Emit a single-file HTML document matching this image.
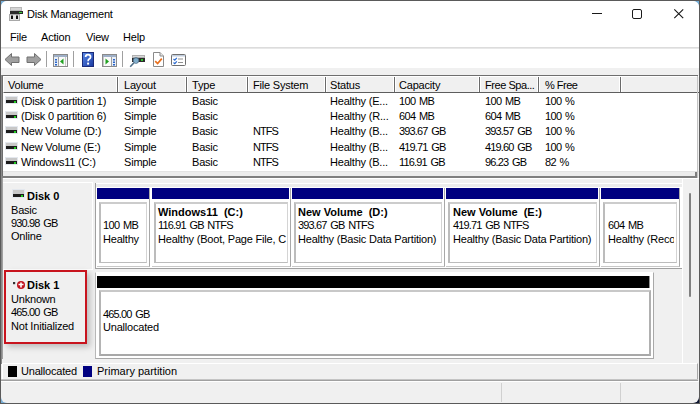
<!DOCTYPE html>
<html><head><meta charset="utf-8">
<style>
*{box-sizing:border-box;margin:0;padding:0}
html,body{width:700px;height:404px;overflow:hidden}
body{position:relative;background:#5a5a5a;font-family:"Liberation Sans",sans-serif;font-size:11px;color:#000;letter-spacing:-0.2px}
div{position:absolute}
.t{white-space:nowrap;line-height:13px}
.n{letter-spacing:-0.6px;word-spacing:1px}
.d{letter-spacing:-0.85px;word-spacing:1.5px}
.b{font-weight:bold;letter-spacing:0;white-space:pre}
#desk{left:1px;top:1px;width:698px;height:402px;background:#78aed6}
#win{left:1px;top:1px;width:698px;height:402px;background:#f0f0f0;border-radius:6px;overflow:hidden}
.ln{height:1px}
.vl{width:1px}
.hdc{top:0;height:16px}
.row{left:0;height:15px;width:100%}
.ic{width:11px;height:6px;background:#1c1c1c;border-top:3px solid #c8c8c8;box-shadow:0 0 0 1px #e4e8ee}
.ic:after{content:"";position:absolute;left:8px;top:1px;width:2px;height:2px;background:#22cc22}
</style></head><body>
<div id="desk"></div>
<div style="left:690px;top:394px;width:9px;height:9px;background:#0c1430"></div>
<div id="win">
  <!-- title + menu + toolbar (white) -->
  <div style="left:0;top:0;width:698px;height:67px;background:#fff"></div>
  <div class="ln" style="left:0;top:46px;width:698px;background:#dcdcdc"></div>
  <div class="ln" style="left:0;top:47px;width:698px;background:#e8e8e8"></div>
  <!-- app icon -->
  <svg style="position:absolute;left:7px;top:6px" width="16" height="15">
    <rect x="2.5" y="0.5" width="11" height="3" fill="#d4d4d4" stroke="#b8b8b8"/>
    <rect x="2" y="4" width="13" height="3" fill="#2a2a2a"/>
    <rect x="11" y="5" width="3" height="1" fill="#3cd03c"/>
    <rect x="1.5" y="7.5" width="10" height="6" fill="#e2e2e2" stroke="#a8a8a8"/>
    <rect x="3" y="8.5" width="2" height="3.5" fill="#111"/>
    <rect x="8" y="8.5" width="2" height="3.5" fill="#111"/>
  </svg>
  <div class="t" style="left:26px;top:7px">Disk Management</div>
  <!-- window controls -->
  <div style="left:591px;top:12px;width:10px;height:1px;background:#1a1a1a"></div>
  <div style="left:631px;top:8px;width:10px;height:10px;border:1.2px solid #1a1a1a;border-radius:2px"></div>
  <svg style="position:absolute;left:672px;top:7px" width="12" height="12"><path d="M1.3 1.3 L10.2 10.2 M10.2 1.3 L1.3 10.2" stroke="#1a1a1a" stroke-width="1.15"/></svg>
  <!-- menu -->
  <div class="t" style="left:9px;top:30px">File</div>
  <div class="t" style="left:40px;top:30px">Action</div>
  <div class="t" style="left:85px;top:30px">View</div>
  <div class="t" style="left:122px;top:30px">Help</div>
  <!-- toolbar -->
  <svg style="position:absolute;left:3px;top:51px" width="40" height="15">
    <path d="M1 7.5 L7.5 1.5 L7.5 5 L15 5 L15 10.5 L7.5 10.5 L7.5 13.5 Z" fill="#a0a0a0" stroke="#707070" stroke-width="1"/>
    <path d="M37 7.5 L30.5 1.5 L30.5 5 L23 5 L23 10.5 L30.5 10.5 L30.5 13.5 Z" fill="#a0a0a0" stroke="#707070" stroke-width="1"/>
  </svg>
  <div class="vl" style="left:45px;top:50px;height:16px;background:#a0a0a0"></div>
  <div class="vl" style="left:72px;top:50px;height:16px;background:#a0a0a0"></div>
  <div class="vl" style="left:121px;top:50px;height:16px;background:#a0a0a0"></div>
  <!-- icon: console tree -->
  <svg style="position:absolute;left:52px;top:53px" width="16" height="13">
    <rect x="0.5" y="0.5" width="14" height="12" fill="#fafafa" stroke="#8a8a8a"/>
    <rect x="1" y="1" width="13" height="2" fill="#9fb0c8"/>
    <rect x="1" y="3" width="4" height="9" fill="#e8eef6"/>
    <rect x="2" y="5" width="2" height="1.5" fill="#2a64c8"/><rect x="2" y="7.5" width="2" height="1.5" fill="#2a64c8"/><rect x="2" y="10" width="2" height="1.5" fill="#2a64c8"/>
    <rect x="5" y="3" width="1" height="9" fill="#a0a0a0"/>
    <path d="M10.5 4.5 L7 7.5 L10.5 10.5 Z" fill="#20a020"/>
    <rect x="12" y="3" width="1" height="9" fill="#c8c8c8"/>
  </svg>
  <!-- help icon -->
  <svg style="position:absolute;left:81px;top:51px" width="13" height="16">
    <defs><linearGradient id="hg" x1="0" y1="0" x2="1" y2="1"><stop offset="0" stop-color="#5a8ae8"/><stop offset="1" stop-color="#1838a0"/></linearGradient></defs>
    <rect x="0.5" y="0.5" width="11" height="14" fill="url(#hg)" stroke="#1a2a78"/>
    <path d="M3.6 5 Q3.6 2.6 6 2.6 Q8.6 2.6 8.6 5 Q8.6 6.4 6.9 7.3 Q6.1 7.8 6.1 9.2" fill="none" stroke="#fff" stroke-width="1.7"/>
    <rect x="5.1" y="10.6" width="2" height="2" fill="#fff"/>
  </svg>
  <!-- action pane icon -->
  <svg style="position:absolute;left:101px;top:53px" width="16" height="13">
    <rect x="0.5" y="0.5" width="14" height="12" fill="#fafafa" stroke="#8a8a8a"/>
    <rect x="1" y="1" width="13" height="2" fill="#9fb0c8"/>
    <rect x="1" y="3" width="1" height="9" fill="#c8c8c8"/>
    <path d="M3.5 4.5 L7 7.5 L3.5 10.5 Z" fill="#20a020"/>
    <rect x="9" y="3" width="1" height="9" fill="#a0a0a0"/>
    <rect x="10" y="3" width="4" height="9" fill="#e8eef6"/>
    <rect x="11" y="5" width="2" height="1.5" fill="#2a64c8"/><rect x="11" y="7.5" width="2" height="1.5" fill="#2a64c8"/><rect x="11" y="10" width="2" height="1.5" fill="#2a64c8"/>
  </svg>
  <!-- rescan icon -->
  <svg style="position:absolute;left:128px;top:53px" width="17" height="14">
    <rect x="3.5" y="1.5" width="12" height="2" fill="#d8d8d8" stroke="#b0b0b0" stroke-width="1"/>
    <rect x="3" y="4" width="13" height="4" fill="#2c2c2c"/>
    <rect x="12" y="5" width="2" height="2" fill="#30c030"/>
    <circle cx="7" cy="6.5" r="2.8" fill="#8ec4e8" fill-opacity="0.85" stroke="#50708a" stroke-width="1"/>
    <path d="M5 8.8 L1.2 12.8" stroke="#50708a" stroke-width="1.6"/>
  </svg>
  <!-- properties icon -->
  <svg style="position:absolute;left:151px;top:50px" width="13" height="17">
    <path d="M1.5 1.5 H8 L11.5 5 V15.5 H1.5 Z" fill="#fff" stroke="#8a8a8a"/><path d="M8 1.5 V5 H11.5" fill="#e8e8e8" stroke="#8a8a8a"/>
    <path d="M3.2 10.2 L5.6 12.6 L9.8 7.6" fill="none" stroke="#e8701e" stroke-width="1.7"/>
  </svg>
  <!-- checklist icon -->
  <svg style="position:absolute;left:170px;top:53px" width="16" height="12">
    <rect x="0.5" y="0.5" width="14" height="11" rx="1" fill="#fff" stroke="#707070"/>
    <rect x="1" y="1" width="13" height="1.5" fill="#c0ccdc"/>
    <path d="M2.5 5 L3.8 6.2 L5.8 3.8" fill="none" stroke="#2a6ad0" stroke-width="1.2"/>
    <path d="M2.5 8.5 L3.8 9.7 L5.8 7.3" fill="none" stroke="#2a6ad0" stroke-width="1.2"/>
    <rect x="7" y="4.5" width="5" height="1" fill="#909090"/><rect x="7" y="8" width="5" height="1" fill="#909090"/>
  </svg>

  <!-- LIST VIEW -->
  <div style="left:1px;top:74px;width:696px;height:103px;background:#fff;border-top:1px solid #6e6e6e;border-left:1px solid #6e6e6e">
    <div class="hdc" style="left:0;width:696px;height:17px;background:#f0f0f0;border-top:1px solid #fff;border-left:1px solid #fff;border-bottom:1px solid #5e5e5e"></div>
    <div style="left:113px;top:1px;width:3px;height:15px;border-left:1px solid #fff;border-right:1px solid #fff;background:#6a6a6a"></div>
    <div style="left:182px;top:1px;width:3px;height:15px;border-left:1px solid #fff;border-right:1px solid #fff;background:#6a6a6a"></div>
    <div style="left:243px;top:1px;width:3px;height:15px;border-left:1px solid #fff;border-right:1px solid #fff;background:#6a6a6a"></div>
    <div style="left:321px;top:1px;width:3px;height:15px;border-left:1px solid #fff;border-right:1px solid #fff;background:#6a6a6a"></div>
    <div style="left:390px;top:1px;width:3px;height:15px;border-left:1px solid #fff;border-right:1px solid #fff;background:#6a6a6a"></div>
    <div style="left:475px;top:1px;width:3px;height:15px;border-left:1px solid #fff;border-right:1px solid #fff;background:#6a6a6a"></div>
    <div style="left:534px;top:1px;width:3px;height:15px;border-left:1px solid #fff;border-right:1px solid #fff;background:#6a6a6a"></div>
    <div style="left:616px;top:1px;width:3px;height:15px;border-left:1px solid #fff;border-right:1px solid #fff;background:#6a6a6a"></div>
    <div class="t" style="left:5px;top:3px">Volume</div>
    <div class="t" style="left:121px;top:3px">Layout</div>
    <div class="t" style="left:189px;top:3px">Type</div>
    <div class="t" style="left:250px;top:3px">File System</div>
    <div class="t" style="left:327px;top:3px">Status</div>
    <div class="t" style="left:396px;top:3px">Capacity</div>
    <div class="t" style="left:482px;top:3px;letter-spacing:-0.45px">Free Spa...</div>
    <div class="t" style="left:542px;top:3px;letter-spacing:-0.5px">% Free</div>

    <div class="row" style="top:17px">
      <div class="ic" style="left:3px;top:4px"></div>
      <div class="t" style="left:18px;top:2px">(Disk 0 partition 1)</div>
      <div class="t" style="left:121px;top:2px">Simple</div>
      <div class="t" style="left:189px;top:2px">Basic</div>
      <div class="t" style="left:327px;top:2px">Healthy (E...</div>
      <div class="t n" style="left:396px;top:2px">100 MB</div>
      <div class="t n" style="left:482px;top:2px">100 MB</div>
      <div class="t n" style="left:542px;top:2px">100 %</div>
    </div>
    <div class="row" style="top:32px">
      <div class="ic" style="left:3px;top:4px"></div>
      <div class="t" style="left:18px;top:2px">(Disk 0 partition 6)</div>
      <div class="t" style="left:121px;top:2px">Simple</div>
      <div class="t" style="left:189px;top:2px">Basic</div>
      <div class="t" style="left:327px;top:2px">Healthy (R...</div>
      <div class="t n" style="left:396px;top:2px">604 MB</div>
      <div class="t n" style="left:482px;top:2px">604 MB</div>
      <div class="t n" style="left:542px;top:2px">100 %</div>
    </div>
    <div class="row" style="top:47px">
      <div class="ic" style="left:3px;top:4px"></div>
      <div class="t" style="left:18px;top:2px">New Volume (D:)</div>
      <div class="t" style="left:121px;top:2px">Simple</div>
      <div class="t" style="left:189px;top:2px">Basic</div>
      <div class="t" style="left:250px;top:2px;letter-spacing:-1px">NTFS</div>
      <div class="t" style="left:327px;top:2px">Healthy (B...</div>
      <div class="t n d" style="left:396px;top:2px">393.67 GB</div>
      <div class="t n d" style="left:482px;top:2px">393.57 GB</div>
      <div class="t n" style="left:542px;top:2px">100 %</div>
    </div>
    <div class="row" style="top:63px">
      <div class="ic" style="left:3px;top:4px"></div>
      <div class="t" style="left:18px;top:2px">New Volume (E:)</div>
      <div class="t" style="left:121px;top:2px">Simple</div>
      <div class="t" style="left:189px;top:2px">Basic</div>
      <div class="t" style="left:250px;top:2px;letter-spacing:-1px">NTFS</div>
      <div class="t" style="left:327px;top:2px">Healthy (B...</div>
      <div class="t n d" style="left:396px;top:2px">419.71 GB</div>
      <div class="t n d" style="left:482px;top:2px">419.60 GB</div>
      <div class="t n" style="left:542px;top:2px">100 %</div>
    </div>
    <div class="row" style="top:78px">
      <div class="ic" style="left:3px;top:4px"></div>
      <div class="t" style="left:18px;top:2px">Windows11 (C:)</div>
      <div class="t" style="left:121px;top:2px">Simple</div>
      <div class="t" style="left:189px;top:2px">Basic</div>
      <div class="t" style="left:250px;top:2px;letter-spacing:-1px">NTFS</div>
      <div class="t" style="left:327px;top:2px">Healthy (B...</div>
      <div class="t n d" style="left:396px;top:2px">116.91 GB</div>
      <div class="t n d" style="left:482px;top:2px">96.23 GB</div>
      <div class="t n" style="left:542px;top:2px">82 %</div>
    </div>
    <div class="ln" style="left:0;top:95px;width:696px;background:#e3e3e3"></div>
    <div style="left:0;top:96px;width:696px;height:4px;background:#ececec"></div>
  </div>
  <div style="left:0;top:175px;width:696px;height:2px;background:#7e7e7e"></div>
  <div style="left:694px;top:171px;width:2px;height:5px;background:#7e7e7e"></div>
  <div class="vl" style="left:696px;top:75px;height:102px;background:#c4c4c4"></div>

  <!-- LOWER PANE -->
  <div class="vl" style="left:0;top:74px;height:289px;background:#8a8a8a;z-index:5"></div>
  <div style="left:1px;top:177px;width:697px;height:181px;background:#f0f0f0;border-left:1px solid #a0a0a0">
    <div class="ln" style="left:0;top:0;width:696px;background:#fff"></div>
  </div>

  <!-- Disk 0 label -->
  <div class="ic" style="left:12px;top:189px;width:11px;height:7px;border-top-width:4px"></div>
  <div class="t b" style="left:26px;top:189px">Disk 0</div>
  <div class="t" style="left:10px;top:203px">Basic</div>
  <div class="t n d" style="left:10px;top:216px">930.98 GB</div>
  <div class="t" style="left:10px;top:229px">Online</div>
  <div class="vl" style="left:91px;top:181px;height:87px;background:#fff"></div>
  <div class="ln" style="left:2px;top:181px;width:90px;background:#fff"></div>
  <div class="ln" style="left:2px;top:268px;width:90px;background:#fff"></div>

  <!-- Disk 0 partitions container -->
  <div style="left:94px;top:182px;width:587px;height:86px;background:#fff;border-left:1px solid #a0a0a0;border-bottom:1px solid #a0a0a0"><div style="left:0;top:1px;width:586px;height:3px;background:#ececec"></div></div>
  <!-- partition cells -->
  <div style="left:96px;top:187px;width:53px;height:79px;background:#fff;border-right:1px solid #a8a8a8;border-bottom:1px solid #c8c8c8">
    <div style="left:0;top:0;width:52px;height:11px;background:#000080"></div>
    <div style="left:2px;top:14px;width:48px;height:61px;border-left:2px solid #bcbcbc;border-top:2px solid #cccccc;border-right:1px solid #d4d4d4;border-bottom:1px solid #bcbcbc"></div>
    <div class="t n" style="left:6px;top:31px">100 MB</div>
    <div class="t" style="left:6px;top:45px">Healthy</div>
  </div>
  <div style="left:151px;top:187px;width:139px;height:79px;background:#fff;border-right:1px solid #a8a8a8;border-bottom:1px solid #c8c8c8">
    <div style="left:0;top:0;width:137px;height:11px;background:#000080"></div>
    <div style="left:2px;top:14px;width:134px;height:61px;border-left:2px solid #bcbcbc;border-top:2px solid #cccccc;border-right:1px solid #d4d4d4;border-bottom:1px solid #bcbcbc"></div>
    <div class="t b" style="left:6px;top:18px">Windows11  (C:)</div>
    <div class="t n d" style="left:6px;top:31px">116.91 GB NTFS</div>
    <div class="t" style="left:6px;top:45px;width:130px;overflow:hidden">Healthy (Boot, Page File, C</div>
  </div>
  <div style="left:291px;top:187px;width:153px;height:79px;background:#fff;border-right:1px solid #a8a8a8;border-bottom:1px solid #c8c8c8">
    <div style="left:0;top:0;width:151px;height:11px;background:#000080"></div>
    <div style="left:2px;top:14px;width:148px;height:61px;border-left:2px solid #bcbcbc;border-top:2px solid #cccccc;border-right:1px solid #d4d4d4;border-bottom:1px solid #bcbcbc"></div>
    <div class="t b" style="left:6px;top:18px">New Volume  (D:)</div>
    <div class="t n d" style="left:6px;top:31px">393.67 GB NTFS</div>
    <div class="t" style="left:6px;top:45px">Healthy (Basic Data Partition)</div>
  </div>
  <div style="left:445px;top:187px;width:154px;height:79px;background:#fff;border-right:1px solid #a8a8a8;border-bottom:1px solid #c8c8c8">
    <div style="left:0;top:0;width:152px;height:11px;background:#000080"></div>
    <div style="left:2px;top:14px;width:149px;height:61px;border-left:2px solid #bcbcbc;border-top:2px solid #cccccc;border-right:1px solid #d4d4d4;border-bottom:1px solid #bcbcbc"></div>
    <div class="t b" style="left:7px;top:18px">New Volume  (E:)</div>
    <div class="t n d" style="left:7px;top:31px">419.71 GB NTFS</div>
    <div class="t" style="left:7px;top:45px">Healthy (Basic Data Partition)</div>
  </div>
  <div style="left:600px;top:187px;width:79px;height:79px;background:#fff;border-right:1px solid #a8a8a8;border-bottom:1px solid #c8c8c8">
    <div style="left:0;top:0;width:78px;height:11px;background:#000080"></div>
    <div style="left:2px;top:14px;width:74px;height:61px;border-left:2px solid #bcbcbc;border-top:2px solid #cccccc;border-right:1px solid #d4d4d4;border-bottom:1px solid #bcbcbc"></div>
    <div class="t n" style="left:7px;top:31px">604 MB</div>
    <div class="t" style="left:7px;top:45px;width:66px;overflow:hidden">Healthy (Recovery Partition)</div>
  </div>

  <!-- Disk 1 label with red box -->
  <div style="left:3px;top:269px;width:83px;height:74px;border:2px solid #c8141e;box-shadow:3px 3px 6px rgba(0,0,0,0.22)"></div>
  <svg style="position:absolute;left:11px;top:279px" width="16" height="10"><rect x="1" y="2" width="2.2" height="2.2" fill="#333"/><circle cx="9" cy="5" r="4" fill="#c0141e"/><path d="M6.5 4.5 H11.5 M9 2.5 V7.5" stroke="#fff" stroke-width="1.6"/></svg>
  <div class="t b" style="left:26px;top:278px">Disk 1</div>
  <div class="t" style="left:10px;top:292px">Unknown</div>
  <div class="t n d" style="left:10px;top:305px">465.00 GB</div>
  <div class="t" style="left:10px;top:319px">Not Initialized</div>

  <!-- Disk 1 container -->
  <div style="left:94px;top:271px;width:559px;height:87px;background:#fff;border-left:1px solid #b8b8b8;border-top:1px solid #fff;border-right:1px solid #a8a8a8;border-bottom:1px solid #a8a8a8">
    <div style="left:1px;top:3px;width:553px;height:12px;background:#000;border-right:1px solid #909090"></div>
    <div style="left:3px;top:17px;width:552px;height:66px;border-left:2px solid #b4b4b4;border-top:2px solid #c8c8c8;border-right:2px solid #b0b0b0;border-bottom:2px solid #a8a8a8"></div>
    <div class="t n d" style="left:7px;top:35px">465.00 GB</div>
    <div class="t" style="left:7px;top:48px">Unallocated</div>
  </div>

  <!-- scrollbar -->
  <div class="vl" style="left:681px;top:178px;height:184px;background:#fff"></div>
  <div style="left:688px;top:192px;width:2px;height:104px;background:#808080;border-radius:1px"></div>

  <!-- legend -->
  <div style="left:1px;top:362px;width:696px;height:17px;background:#f0f0f0;border-top:1px solid #fff;border-left:1px solid #fff;border-right:1px solid #a8a8a8"></div>
  <div style="left:7px;top:365px;width:9px;height:11px;background:#000"></div>
  <div class="t" style="left:20px;top:364px">Unallocated</div>
  <div style="left:82px;top:365px;width:9px;height:11px;background:#000080"></div>
  <div class="t" style="left:96px;top:364px;letter-spacing:0">Primary partition</div>
  <div class="ln" style="left:0;top:378px;width:697px;background:#c4c4c4"></div>
  <div class="ln" style="left:0;top:379px;width:697px;background:#a0a0a0"></div>
  <div class="ln" style="left:0;top:380px;width:698px;background:#fff"></div>
  <!-- status bar -->
  <div class="vl" style="left:500px;top:382px;height:19px;background:#d0d0d0"></div>
  <div class="vl" style="left:619px;top:382px;height:19px;background:#d0d0d0"></div>
</div>
</body></html>
